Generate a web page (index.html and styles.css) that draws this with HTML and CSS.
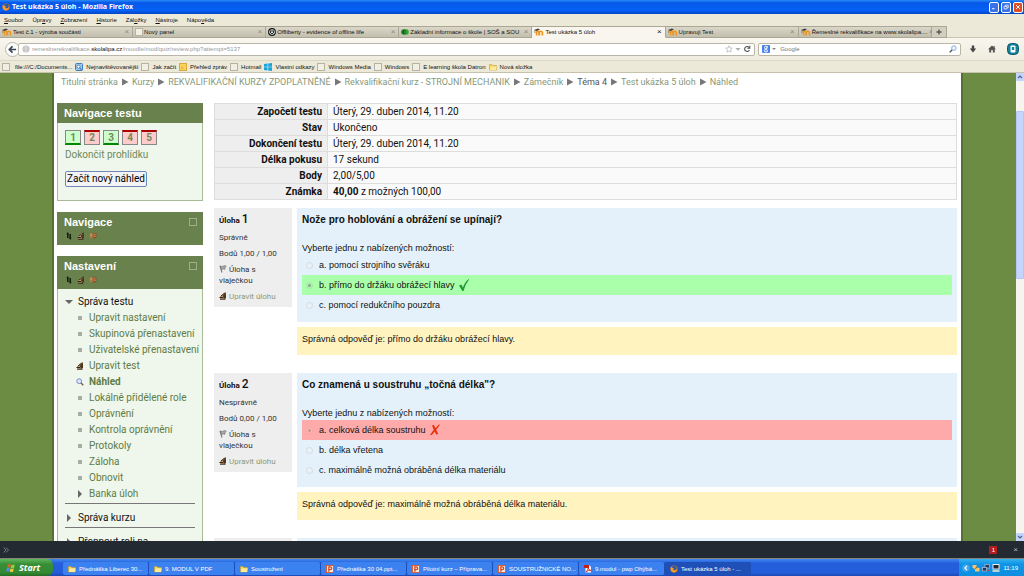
FILE: index.html
```html
<!DOCTYPE html>
<html lang="cs">
<head>
<meta charset="utf-8">
<title>Test ukázka 5 úloh</title>
<link rel="stylesheet" href="styles.css">
</head>
<body>
<svg class="sprite" aria-hidden="true">
  <symbol id="moodle" viewBox="0 0 10 8"><path d="M2.6 7.5V4.6Q2.6 3.4 3.8 3.4T5 4.6V7.5M5.4 7.5V4.6Q5.4 3.2 6.8 3.2T8.4 4.6V7.5" fill="none" stroke="#f0951c" stroke-width="1.6"/><path d="M0 2 4 .4 6 1.6 2.6 3Z" fill="#443c34"/><path d="M.9 2.2V5" stroke="#6b5540" stroke-width=".7"/></symbol>
  <symbol id="blank" viewBox="0 0 8 8"><rect x=".5" y=".5" width="7" height="7" fill="#f1eee2" stroke="#b5b2a6"/></symbol>
  <symbol id="folder" viewBox="0 0 10 9"><path d="M.5 1.5h3.2l1 1.2h4.6v5.5H.5Z" fill="#f6d457" stroke="#c79a2b" stroke-width=".7"/><path d="M1 8.200 2.400 4h7.200L8.600 8.200Z" fill="#fdeb9b"/></symbol>
  <symbol id="firefox" viewBox="0 0 10 10"><circle cx="5" cy="5" r="4.500" fill="#e8731a"/><circle cx="5.300" cy="4" r="3" fill="#2c5ba8"/><path d="M1 2.500Q2 4 4 3.800L5 5 3.600 6Q6 8 8.800 5 8 9.500 4.500 9.300 0 8 1 2.500Z" fill="#f5a02a"/></symbol>
  <symbol id="ppt" viewBox="0 0 9 9"><rect x=".5" y=".5" width="8" height="8" fill="#fbe9df" stroke="#d9572b"/><path d="M3.200 7.500V2.200h1.700a1.500 1.500 0 0 1 0 3H3.200" fill="none" stroke="#d2451c" stroke-width="1.400"/></symbol>
  <symbol id="updown" viewBox="0 0 8 8"><path d="M2.800 0 4.300 2.300H3.600V6H2V2.300H1.300ZM5.200 8 3.700 5.700H4.400V2H6V5.700H6.700Z" fill="#17210f"/></symbol>
  <symbol id="hand" viewBox="0 0 8 8"><path d="M.8 5 3.500 2 5 .8 6.800 1.200 6.800 6 4.500 7 1 6.800Z" fill="#c9a274"/><path d="M3.800 3.800 7 .8V6L5 7Z" fill="#4a3720"/><path d="M.5 5.500h3.500M1.800 4.200 6.500.6M1 7.200h5.500" fill="none" stroke="#2f2415"/></symbol>
  <symbol id="roles" viewBox="0 0 9 8"><path d="M.5 1.200Q2.500.2 4.300 1.200V4.500Q3.500 7 2.400 7 .8 6.400.5 4Z" fill="#dba468" stroke="#7a4c24" stroke-width=".5"/><path d="M4.500 1.400Q6.600.4 8.500 1.400L8 5Q7 7.500 5.800 7.200 4.500 6.500 4.500 4Z" fill="#c67d44" stroke="#6b401a" stroke-width=".5"/><path d="M1.500 2.800h.8M3 2.800h.6M5.600 3h.7M7 3h.7M1.700 5h1.600M5.600 5.700h1.600" stroke="#3d2108" stroke-width=".7"/></symbol>
  <symbol id="flag" viewBox="0 0 8 8"><path d="M1 .8 3 7.500" stroke="#777" stroke-width="1.100"/><path d="M1.300 1Q3 2 4.500 1T7.300 1.500L5.800 2.800 6 4.300Q4.500 3.400 2.400 4.600Z" fill="#aaa" stroke="#666" stroke-width=".6"/></symbol>
  <symbol id="lens" viewBox="0 0 9 9"><path d="M5.400 5.400 8.200 8.200" stroke="#7a5a3a" stroke-width="1.500"/><circle cx="3.600" cy="3.600" r="2.700" fill="#dbe7fb" stroke="#7281c4"/></symbol>
  <symbol id="right" viewBox="0 0 8 8"><path d="M1 .5V7.500L7.500 4Z" fill="#777"/></symbol>
  <symbol id="expand" viewBox="0 0 8 8"><path d="M2 0V8L6 4Z" fill="#666"/></symbol>
  <symbol id="down" viewBox="0 0 8 8"><path d="M0 2H8L4 6Z" fill="#666"/></symbol>
</svg>

<header class="chrome">
  <div class="titlebar">
    <svg class="i8"><use href="#firefox"/></svg>
    <h1>Test ukázka 5 úloh - Mozilla Firefox</h1>
    <div class="winbtns">
      <button aria-label="Minimalizovat"><svg viewBox="0 0 8 8"><path d="M1.500 6.200h3" stroke="#fff" stroke-width="1.400"/></svg></button>
      <button aria-label="Obnovit"><svg viewBox="0 0 8 8"><path d="M3 3V1.500h4V5H5.500M1.300 3.200h4v3.400h-4Z" fill="none" stroke="#fff"/></svg></button>
      <button class="quit" aria-label="Zavřít"><svg viewBox="0 0 8 8"><path d="M1.500 1.500l5 5m0-5l-5 5" stroke="#fff" stroke-width="1.300"/></svg></button>
    </div>
  </div>
  <nav class="menubar">
    <a href="#"><u>S</u>oubor</a><a href="#">Úpr<u>a</u>vy</a><a href="#"><u>Z</u>obrazení</a><a href="#"><u>H</u>istorie</a><a href="#">Zál<u>o</u>žky</a><a href="#"><u>N</u>ástroje</a><a href="#">Nápo<u>v</u>ěda</a>
  </nav>
  <div class="tabs">
    <div class="tab"><svg class="i10"><use href="#moodle"/></svg><span>Test č.1 - výroba součástí</span><button aria-label="Zavřít panel">×</button></div>
    <div class="tab"><svg class="i8"><use href="#blank"/></svg><span>Nový panel</span><button aria-label="Zavřít panel">×</button></div>
    <div class="tab"><svg class="i8" viewBox="0 0 10 10"><circle cx="5" cy="5" r="4.200" fill="#fff" stroke="#111" stroke-width="1.400"/><path d="M3 3v2q0 2 2 2t2-2V3M5 2v3" fill="none" stroke="#111" stroke-width="1.200"/></svg><span>Offliberty - evidence of offline life</span><button aria-label="Zavřít panel">×</button></div>
    <div class="tab"><svg class="i8" viewBox="0 0 10 8"><circle cx="3.500" cy="4" r="3.300" fill="#1c8128"/><circle cx="6.500" cy="4" r="3.300" fill="#35a339"/><path d="M3 2v4M5 1v6" stroke="#0d4717"/></svg><span>Základní informace o škole | SOŠ a SOU</span><button aria-label="Zavřít panel">×</button></div>
    <div class="tab active"><svg class="i10"><use href="#moodle"/></svg><span>Test ukázka 5 úloh</span><button aria-label="Zavřít panel">×</button></div>
    <div class="tab"><svg class="i10"><use href="#moodle"/></svg><span>Upravuji Test</span><button aria-label="Zavřít panel">×</button></div>
    <div class="tab"><svg class="i10"><use href="#moodle"/></svg><span>Řemeslné rekvalifikace na www.skolalipa....</span><button aria-label="Zavřít panel">×</button></div>
    <button class="newtab" aria-label="Nový panel"><svg viewBox="0 0 8 8"><path d="M4 1.500v5M1.500 4h5" stroke="#555" stroke-width="1.300"/></svg></button>
    <div class="tabrest"></div>
  </div>
  <div class="navbar">
    <button class="back" aria-label="Zpět"><svg viewBox="0 0 10 10"><path d="M5 1.500 1.500 5 5 8.500M2 5h7" fill="none" stroke="#3a4656" stroke-width="1.900"/></svg></button>
    <div class="urlbox">
      <svg class="i8" viewBox="0 0 8 8"><circle cx="4" cy="4" r="3.500" fill="#b9b9b9"/><path d="M.6 4h6.800M4 .6v6.800M1.500 2h5M1.500 6h5" stroke="#eee" stroke-width=".6"/></svg>
      <span class="url">remeslnerekvalifikace.<b>skolalipa.cz</b>/moodle/mod/quiz/review.php?attempt=5137</span>
      <svg class="i8" viewBox="0 0 10 10"><path d="M5 1l1.200 2.700 2.900.3L7 6l.6 2.900L5 7.400 2.400 8.900 3 6 .9 4l2.900-.3Z" fill="#fff" stroke="#a4a7ad" stroke-width=".8"/></svg>
      <svg class="i6" viewBox="0 0 6 6"><path d="M.5 2h5L3 4.800Z" fill="#aaa"/></svg>
      <svg class="i8" viewBox="0 0 8 8"><path d="M6 2.300A2.500 2.500 0 1 0 6.400 5M6.800.8V3.200H4.300" fill="none" stroke="#555" stroke-width="1.100"/></svg>
    </div>
    <div class="searchbox">
      <svg class="i8" viewBox="0 0 8 8"><rect width="8" height="8" rx="1" fill="#4780e8"/><circle cx="3.800" cy="2.600" r="1.300" fill="none" stroke="#fff"/><ellipse cx="3.900" cy="5.800" rx="1.700" ry="1.200" fill="none" stroke="#fff"/><path d="M3.800 1.300h2M5 1.500v2" stroke="#fff" stroke-width=".7"/></svg>
      <svg class="i4" viewBox="0 0 4 4"><path d="M0 1h4L2 3Z" fill="#888"/></svg>
      <input type="text" placeholder="Google" aria-label="Hledat">
      <svg class="i8" viewBox="0 0 8 8"><path d="M3.200 4.800.7 7.300" stroke="#555" stroke-width="1.300"/><circle cx="4.900" cy="3.100" r="2.300" fill="#eef5fd" stroke="#6f9bd0" stroke-width=".8"/></svg>
    </div>
    <div class="tools">
      <button aria-label="Stahování"><svg viewBox="0 0 8 8"><path d="M2.800.6h2.400v3h2L4 7.500.8 3.600h2Z" fill="#444"/></svg></button>
      <button aria-label="Domů"><svg viewBox="0 0 8 8"><path d="M4 .5 0 4.200h1.200v3.300h2V5h1.600v2.500h2V4.200H8L6.700 3V1H5.600v1Z" fill="#555"/></svg></button>
      <button class="addon" aria-label="Doplněk"><svg viewBox="0 0 12 12"><rect x=".5" y=".5" width="11" height="11" rx="4" fill="#12819b" stroke="#0b5670"/><rect x="3.500" y="2.500" width="5" height="7" rx="1" fill="#fff"/><path d="M4.800 4h2.400v3H4.800Z" fill="#16829a"/></svg></button>
    </div>
  </div>
  <nav class="bookmarks">
    <a href="#"><svg class="i8"><use href="#blank"/></svg>file:///C:/Documents...</a>
    <a href="#"><svg class="i8" viewBox="0 0 8 8"><rect x=".5" y=".5" width="7" height="7" rx="1" fill="#9cc8ee" stroke="#3b7fc0"/><circle cx="3.500" cy="3.700" r="1.600" fill="#fff" stroke="#27639f" stroke-width=".7"/><path d="M4.700 5 7 7.300" stroke="#27639f"/></svg>Nejnavštěvovanější</a>
    <a href="#"><svg class="i8"><use href="#blank"/></svg>Jak začít</a>
    <a href="#"><svg class="i8" viewBox="0 0 8 8"><rect x=".5" y=".5" width="7" height="7" fill="#f7d35c" stroke="#d9aa3c"/><path d="M2 5.800h.8M2 3.800q2 0 2.200 2.200" fill="none" stroke="#e59b2b" stroke-width=".8"/></svg>Přehled zpráv</a>
    <a href="#"><svg class="i8"><use href="#blank"/></svg>Hotmail</a>
    <a href="#"><svg class="i8" viewBox="0 0 8 8"><path d="M0 1 3.500.5V3.700H0ZM4.200.4 8 0v3.700H4.200ZM0 4.300h3.500v3.200L0 7ZM4.200 4.300H8V8L4.200 7.500Z" fill="#16a5dc"/></svg>Vlastní odkazy</a>
    <a href="#"><svg class="i8"><use href="#blank"/></svg>Windows Media</a>
    <a href="#"><svg class="i8"><use href="#blank"/></svg>Windows</a>
    <a href="#"><svg class="i8"><use href="#blank"/></svg>E learning škola Datron</a>
    <a href="#"><svg class="i8"><use href="#folder"/></svg>Nová složka</a>
  </nav>
</header>

<div class="viewport">
  <div class="page">
    <nav class="crumbs" aria-label="Drobečková navigace">
      <a href="#">Titulní stránka</a><svg><use href="#right"/></svg><a href="#">Kurzy</a><svg><use href="#right"/></svg><a href="#">REKVALIFIKAČNÍ KURZY ZPOPLATNĚNÉ</a><svg><use href="#right"/></svg><a href="#">Rekvalifikační kurz - STROJNÍ MECHANIK</a><svg><use href="#right"/></svg><a href="#">Zámečník</a><svg><use href="#right"/></svg><span>Téma 4</span><svg><use href="#right"/></svg><a href="#">Test ukázka 5 úloh</a><svg><use href="#right"/></svg><a href="#">Náhled</a>
    </nav>
    <div class="columns">
      <aside class="side">
        <section class="block">
          <div class="head"><h2>Navigace testu</h2></div>
          <div class="quiznav">
            <div class="squares"><a class="ok" href="#q1">1</a><a class="bad" href="#q2">2</a><a class="ok" href="#q3">3</a><a class="bad" href="#q3">4</a><a class="bad" href="#q3">5</a></div>
            <a class="finish" href="#">Dokončit prohlídku</a>
            <button class="restart">Začít nový náhled</button>
          </div>
        </section>
        <section class="block">
          <div class="head"><h2>Navigace</h2><button class="fold" aria-label="Sbalit blok"></button>
            <div class="editicons"><svg class="i8"><use href="#updown"/></svg><svg class="i8"><use href="#hand"/></svg><svg class="i8"><use href="#roles"/></svg></div></div>
        </section>
        <section class="block">
          <div class="head"><h2>Nastavení</h2><button class="fold" aria-label="Sbalit blok"></button>
            <div class="editicons"><svg class="i8"><use href="#updown"/></svg><svg class="i8"><use href="#hand"/></svg><svg class="i8"><use href="#roles"/></svg></div></div>
          <div class="tree">
            <p class="branch"><svg class="i8"><use href="#down"/></svg>Správa testu</p>
            <ul>
              <li><i class="dot"></i><a href="#">Upravit nastavení</a></li>
              <li><i class="dot"></i><a href="#">Skupinová přenastavení</a></li>
              <li><i class="dot"></i><a href="#">Uživatelské přenastavení</a></li>
              <li><svg class="i8"><use href="#hand"/></svg><a href="#">Upravit test</a></li>
              <li><svg class="i8"><use href="#lens"/></svg><a class="current" href="#">Náhled</a></li>
              <li><i class="dot"></i><a href="#">Lokálně přidělené role</a></li>
              <li><i class="dot"></i><a href="#">Oprávnění</a></li>
              <li><i class="dot"></i><a href="#">Kontrola oprávnění</a></li>
              <li><i class="dot"></i><a href="#">Protokoly</a></li>
              <li><i class="dot"></i><a href="#">Záloha</a></li>
              <li><i class="dot"></i><a href="#">Obnovit</a></li>
              <li><svg class="i8"><use href="#expand"/></svg><a href="#">Banka úloh</a></li>
            </ul>
            <hr>
            <p class="branch"><svg class="i8"><use href="#expand"/></svg>Správa kurzu</p>
            <hr>
            <p class="branch"><svg class="i8"><use href="#expand"/></svg>Přepnout roli na...</p>
          </div>
        </section>
      </aside>
      <main class="main">
        <table class="summary">
          <tr><th scope="row">Započetí testu</th><td>Úterý, 29. duben 2014, 11.20</td></tr>
          <tr><th scope="row">Stav</th><td>Ukončeno</td></tr>
          <tr><th scope="row">Dokončení testu</th><td>Úterý, 29. duben 2014, 11.20</td></tr>
          <tr><th scope="row">Délka pokusu</th><td>17 sekund</td></tr>
          <tr><th scope="row">Body</th><td>2,00/5,00</td></tr>
          <tr><th scope="row">Známka</th><td><b>40,00</b> z možných 100,00</td></tr>
        </table>

        <section class="question" id="q1">
          <div class="info">
            <h3>Úloha <b>1</b></h3>
            <p>Správně</p>
            <p>Bodů 1,00 / 1,00</p>
            <p><svg class="i8"><use href="#flag"/></svg> Úloha s vlaječkou</p>
            <p><a href="#"><svg class="i8"><use href="#hand"/></svg> Upravit úlohu</a></p>
          </div>
          <div class="body">
            <div class="formulation">
              <h4>Nože pro hoblování a obrážení se upínají?</h4>
              <p>Vyberte jednu z nabízených možností:</p>
              <label class="opt"><input type="radio" name="a1" disabled>a. pomocí strojního svěráku</label>
              <label class="opt right"><input type="radio" name="a1" checked disabled>b. přímo do držáku obrážecí hlavy<svg class="mark" viewBox="0 0 12 14"><path d="M1 7.500 3.300 6.500 5 9.500Q7 3.500 10.800 1L11 1.600Q7.500 6 5.500 13H4.300Z" fill="#1f9a35"/></svg></label>
              <label class="opt"><input type="radio" name="a1" disabled>c. pomocí redukčního pouzdra</label>
            </div>
            <div class="outcome">Správná odpověď je: přímo do držáku obrážecí hlavy.</div>
          </div>
        </section>

        <section class="question" id="q2">
          <div class="info">
            <h3>Úloha <b>2</b></h3>
            <p>Nesprávně</p>
            <p>Bodů 0,00 / 1,00</p>
            <p><svg class="i8"><use href="#flag"/></svg> Úloha s vlaječkou</p>
            <p><a href="#"><svg class="i8"><use href="#hand"/></svg> Upravit úlohu</a></p>
          </div>
          <div class="body">
            <div class="formulation">
              <h4>Co znamená u soustruhu „točná délka"?</h4>
              <p>Vyberte jednu z nabízených možností:</p>
              <label class="opt wrong"><input type="radio" name="a2" checked disabled>a. celková délka soustruhu<svg class="mark" viewBox="0 0 12 14"><path d="M3 2.500 5 2 6.400 5.300 9.500 1.800 11 1.500 7.200 7 9.300 11 7.200 11.500 5.700 8.500 2.800 12 1 12 4.700 6.800Z" fill="#e8320c"/></svg></label>
              <label class="opt"><input type="radio" name="a2" disabled>b. délka vřetena</label>
              <label class="opt"><input type="radio" name="a2" disabled>c. maximálně možná obráběná délka materiálu</label>
            </div>
            <div class="outcome">Správná odpověď je: maximálně možná obráběná délka materiálu.</div>
          </div>
        </section>

        <section class="question" id="q3">
          <div class="info"></div>
          <div class="body"><div class="formulation"></div></div>
        </section>
      </main>
    </div>
  </div>
  <div class="scrollbar" aria-hidden="true">
    <svg viewBox="0 0 8 8"><rect width="8" height="8" rx="1" fill="#c3d3fd"/><path d="M2 5 4 3 6 5" fill="none" stroke="#4d6185" stroke-width="1.200"/></svg>
    <div class="thumb"></div>
    <svg viewBox="0 0 8 8"><rect width="8" height="8" rx="1" fill="#c3d3fd"/><path d="M2 3 4 5 6 3" fill="none" stroke="#4d6185" stroke-width="1.200"/></svg>
  </div>
</div>

<div class="addonbar">
  <svg class="i8" viewBox="0 0 8 8"><path d="M1.500 1.500 4 4 1.500 6.500M4 1.500 6.500 4 4 6.500" fill="none" stroke="#7c8289" stroke-width=".9"/></svg>
  <span class="count">1</span><button aria-label="Zavřít lištu">×</button>
</div>

<footer class="taskbar">
  <button class="start"><svg viewBox="0 0 10 10"><path d="M1.800 1.500Q3.200.6 4.800 1.500L4 4.700Q2.600 4 1 4.700Z" fill="#ee5a26"/><path d="M5.400 1.700Q7 2.500 8.800 1.600L8 4.900Q6.300 5.700 4.700 4.900Z" fill="#8fd13c"/><path d="M.9 5.200Q2.300 4.500 3.900 5.300L3.100 8.400Q1.700 7.600.1 8.400Z" fill="#4d8ef7"/><path d="M4.500 5.500Q6 6.300 7.800 5.500L7 8.700Q5.400 9.500 3.700 8.600Z" fill="#fbc82a"/></svg>Start</button>
  <div class="tasks">
    <button><svg class="i8"><use href="#folder"/></svg>Přednáška Liberec 30...</button>
    <button><svg class="i8"><use href="#folder"/></svg>9. MODUL V PDF</button>
    <button><svg class="i8"><use href="#folder"/></svg>Soustružení</button>
    <button><svg class="i8"><use href="#ppt"/></svg>Přednáška 30 04.ppt...</button>
    <button><svg class="i8"><use href="#ppt"/></svg>Pilotní kurz – Příprava...</button>
    <button><svg class="i8"><use href="#ppt"/></svg>SOUSTRUŽNICKÉ NO...</button>
    <button><svg class="i8" viewBox="0 0 8 8"><path d="M1.500.5h4L7 2v5.500H1.500Z" fill="#fff"/><rect width="5" height="3" fill="#c81e16"/><path d="M2 7Q5 4 4 2 4 5 7 5.500 4 5 2 7" fill="none" stroke="#c81e16" stroke-width=".8"/></svg>9.modul - pwp Ohýbá...</button>
    <button class="pressed"><svg class="i8"><use href="#firefox"/></svg>Test ukázka 5 úloh - ...</button>
  </div>
  <div class="tray">
    <svg class="i8" viewBox="0 0 8 8"><circle cx="4" cy="4" r="3.800" fill="#3fa6ef"/><path d="M5 1.800 2.900 4 5 6.200" fill="none" stroke="#fff" stroke-width="1.200"/></svg>
    <svg class="i8" viewBox="0 0 8 8"><path d="M.5 1h4v2.500l3 .5v3.500H3V5L.5 4Z" fill="#f2c46b"/><path d="M3 4.500 5 3.400" stroke="#8a5a1e"/></svg>
    <svg class="i8" viewBox="0 0 8 8"><rect x="3" y=".5" width="4.500" height="3.500" fill="#29335f" stroke="#b8bdd6" stroke-width=".7"/><rect x=".5" y="3.500" width="4" height="3.500" fill="#29335f" stroke="#b8bdd6" stroke-width=".7"/><path d="M6 5.500l1 1.700" stroke="#e23322"/></svg>
    <svg class="i8" viewBox="0 0 8 8"><rect x="1" y=".5" width="6" height="4.500" fill="#223" stroke="#eee"/><path d="M.5 7h7" stroke="#e8e3d0" stroke-width="1.600"/></svg>
    <time>11:19</time>
  </div>
</footer>
</body>
</html>
```
FILE: styles.css
```css
* { box-sizing: border-box; }
body {
  margin: 0;
  height: 100vh;
  display: flex;
  flex-direction: column;
  overflow: hidden;
  font-family: Roboto, "Liberation Sans", sans-serif;
  font-size: 10px;
  line-height: 14px;
  color: #111;
}
h1, h2, h3, h4, p, ul { margin: 0; padding: 0; font-size: inherit; }
ul { list-style: none; }
a { color: #6f8a58; text-decoration: none; }
button { margin: 0; padding: 0; border: 0; background: none; font: inherit; color: inherit; }
svg { flex: none; display: block; }
.sprite { position: absolute; width: 0; height: 0; }
.i4 { width: 4px; height: 4px; }
.i6 { width: 6px; height: 6px; }
.i8 { width: 8px; height: 8px; }
.i10 { width: 10px; height: 8px; }

/* browser window */
.chrome, .taskbar, .addonbar {
  flex: none;
  font-family: "Liberation Sans", sans-serif;
  font-size: 6px;
  line-height: 8px;
}
.chrome { background: #ece9d8; color: #111; }
.chrome a { color: #111; }
.titlebar {
  display: flex;
  align-items: center;
  gap: 2px;
  height: 14px;
  padding: 0 1px 0 2px;
  background: linear-gradient(#2b8bf8, #0558e8 20%, #0560f5 75%, #0345c4);
  color: #fff;
}
.titlebar h1 { flex: 1; font-family: "Noto Sans", sans-serif; font-size: 7px; line-height: 10px; }
.winbtns { display: flex; gap: 2px; }
.winbtns button { width: 10px; height: 11px; padding: 1px; border: 1px solid #fff; border-radius: 2px; background: #3c72e6; }
.winbtns .quit { background: #df4c28; }
.menubar { display: flex; gap: 9px; height: 12px; align-items: center; padding-left: 4px; }
.tabs { display: flex; height: 12px; }
.tab {
  flex: 0 1 13%;
  min-width: 0;
  display: flex;
  align-items: center;
  gap: 1px;
  padding: 0 3px 0 2px;
  border: 1px solid #aaa794;
  border-width: 1px 1px 1px 0;
  background: linear-gradient(#dad7c8, #c2bfae);
  white-space: nowrap;
}
.tab span { flex: 1; }
.tab button { color: #888; font-size: 8px; }
.tab.active { background: #f8f6ee; border-bottom-color: #f8f6ee; }
.tab.active button { color: #222; }
.newtab { width: 15px; padding: 1px 3px; border: 1px solid #aaa794; border-left: 0; background: #d2cfbf; }
.newtab svg { width: 8px; height: 8px; }
.tabrest { flex: 1; border-bottom: 1px solid #c9c5b3; }
.navbar { display: flex; align-items: center; gap: 3px; height: 22px; padding: 0 5px; background: linear-gradient(#f8f6ee, #efecdf); }
.back { width: 15px; height: 15px; padding: 2px; border: 1px solid #b9b6a8; border-radius: 50%; background: #fdfdfb; }
.urlbox, .searchbox { display: flex; align-items: center; gap: 2px; height: 13px; padding: 0 3px; border: 1px solid #b9b6a8; border-radius: 2px; background: #fff; }
.urlbox { flex: 1; margin-left: -5px; padding-left: 3px; color: #999; }
.url { flex: 1; white-space: nowrap; }
.url b { font-weight: normal; color: #111; }
.searchbox { flex: 0 0 20%; }
.searchbox input { flex: 1; min-width: 0; padding: 0 2px; border: 0; background: none; font: inherit; }
.searchbox input::placeholder { color: #777; }
.tools { display: flex; align-items: center; gap: 11px; padding-left: 5px; }
.tools svg { width: 8px; height: 8px; }
.tools .addon svg { width: 12px; height: 12px; }
.bookmarks { display: flex; gap: 3px; height: 13px; align-items: center; padding: 0 2px; border-top: 1px solid #dcd8c6; border-bottom: 1px solid #c6c2ae; white-space: nowrap; }
.bookmarks a { display: flex; align-items: center; gap: 3px; }
.bookmarks a:first-child { gap: 5px; }

/* page */
.viewport { flex: 1; min-height: 0; display: flex; overflow: hidden; background: #6c8c43; }
.page {
  flex: 1;
  min-width: 0;
  margin: 0 55px 0 54px;
  padding: 2px 4px 0 3px;
  background: #fff;
  box-shadow: 0 0 0 2px #557233;
  overflow: hidden;
}
.crumbs { display: flex; align-items: center; gap: 3px; height: 14px; padding-left: 4px; font-size: 9px; white-space: nowrap; }
.crumbs a { color: #86997a; }
.crumbs span { color: #555; }
.crumbs svg { width: 8px; height: 8px; }
.columns { display: flex; align-items: flex-start; gap: 11px; padding-top: 14px; }
.side { flex: 0 0 146px; min-width: 0; display: flex; flex-direction: column; gap: 11px; }
.block { border: 1px solid #a9ba98; background: #eff6ec; }
.head { display: flex; flex-wrap: wrap; align-items: center; justify-content: space-between; margin: -1px; padding: 2px 6px 2px 7px; background: #69824d; color: #fff; }
.head h2 { font-family: "Liberation Sans", sans-serif; font-size: 11px; line-height: 16px; }
.fold { width: 8px; height: 8px; border: 1px solid #9eb08a; }
.editicons { display: flex; flex-basis: 100%; gap: 4px; padding: 2px 0 3px 1px; }
.quiznav { display: flex; flex-direction: column; align-items: flex-start; padding: 8px 7px 13px; }
.squares { display: flex; gap: 3px; }
.squares a { width: 16px; height: 15px; border: 1px solid #888; font-weight: bold; line-height: 13px; text-align: center; }
.squares .ok { background: #ccffcc; border-bottom: 2px solid #080; }
.squares .bad { background: #ffcccc; border-top: 2px solid #a00; line-height: 12px; }
.finish { margin: 3px 0 9px; }
.restart { padding: 0 1px; border: 1px solid #7088b8; border-radius: 2px; background: #f4f4f6; color: #000; }
.tree { padding: 6px 7px 8px; line-height: 16px; }
.branch { display: flex; align-items: center; gap: 5px; }
.tree li { display: flex; align-items: center; gap: 5px; padding-left: 11px; white-space: nowrap; }
.tree li a { color: #607c45; }
.tree .current { font-weight: bold; }
.dot { flex: none; width: 4px; height: 4px; margin: 0 2px; background: #a5ada0; }
.tree hr { height: 1px; margin: 1px 0 6px; border: 0; background: #777; }

.main { flex: 1; min-width: 0; }
.summary { width: 100%; margin-bottom: 8px; border-collapse: collapse; background: #fafafa; }
.summary th, .summary td { padding: 0 5px; border: 1px solid #ddd; line-height: 15px; text-align: left; }
.summary th { width: 113px; background: #eee; text-align: right; }
.question { display: flex; align-items: flex-start; gap: 5px; margin-bottom: 18px; }
.info { flex: 0 0 78px; display: flex; flex-direction: column; gap: 5px; padding: 5px; background: #eee; font-size: 8px; line-height: 11px; color: #333; }
.info h3 { display: flex; align-items: baseline; gap: 2px; line-height: 13px; color: #111; }
.info h3 b { font-size: 12px; font-weight: 500; line-height: 12px; }
.info svg { display: inline-block; vertical-align: top; margin-top: 1px; }
.info a { color: #8a9a7b; }
.body { flex: 1; min-width: 0; display: flex; flex-direction: column; gap: 5px; font-family: "Liberation Sans", sans-serif; font-size: 9px; }
.formulation { padding: 5px 5px 7px; background: #e4f1fa; }
.formulation h4 { margin-bottom: 14px; font-size: 10px; }
.opt { display: flex; align-items: center; height: 20px; }
.opt input { appearance: none; width: 7px; height: 7px; margin: 0 6px 0 4px; border: 1px solid #d3dbe0; border-radius: 50%; background: #eaf2f7; }
.opt.right { background: #aaffaa; }
.opt.right input { border-color: #a5e6a5; background: radial-gradient(#89ac89 1px, #b2f5b2 2px); }
.opt.wrong { background: #ffaaaa; }
.opt.wrong input { border-color: #f3a8a8; background: radial-gradient(#d09494 1px, #fbb 2px); }
.mark { width: 12px; height: 14px; margin-left: 3px; }
.outcome { padding: 5px 5px 9px; background: #fff3bf; }

.scrollbar { flex: none; width: 8px; display: flex; flex-direction: column; justify-content: space-between; background: #f5f4ee; }
.scrollbar svg { width: 8px; height: 8px; }
.thumb { height: 36%; margin: 30px 0 auto; border: 1px solid #b3c5f5; border-radius: 1px; background: #c5d5fd; }

/* bottom bars */
.addonbar { display: flex; align-items: center; gap: 16px; height: 17px; padding: 0 6px 0 2px; background: #242a31; color: #fff; }
.count { margin-left: auto; width: 8px; background: #b31d1d; text-align: center; }
.addonbar button { color: #bbb; font-size: 8px; }
.taskbar { display: flex; height: 18px; border-top: 1px solid #85847c; background: linear-gradient(#4088f0, #245edb 25%, #245edb 80%, #1a49b5); color: #fff; }
.start { display: flex; align-items: center; gap: 3px; width: 53px; padding-left: 6px; border-radius: 0 6px 6px 0; background: linear-gradient(#5eb85a, #388e36 30%, #338a32 80%, #246b24); font: italic bold 9px/12px "Noto Sans", sans-serif; }
.start svg { width: 10px; height: 10px; }
.tasks { flex: 1; display: flex; padding: 3px 0 1px 10px; }
.tasks button { flex: 0 1 86px; min-width: 0; display: flex; align-items: center; gap: 3px; padding-left: 5px; border-right: 1px solid #1d4fb8; border-radius: 2px; background: #3c81f0; white-space: nowrap; }
.tasks .pressed { background: #1e50b8; }
.tray { display: flex; align-items: center; gap: 2px; padding: 0 6px 0 3px; background: linear-gradient(#35b3f0, #0f93e6 30%, #0f8ee0); }
.tray time { padding-left: 1px; }
```
